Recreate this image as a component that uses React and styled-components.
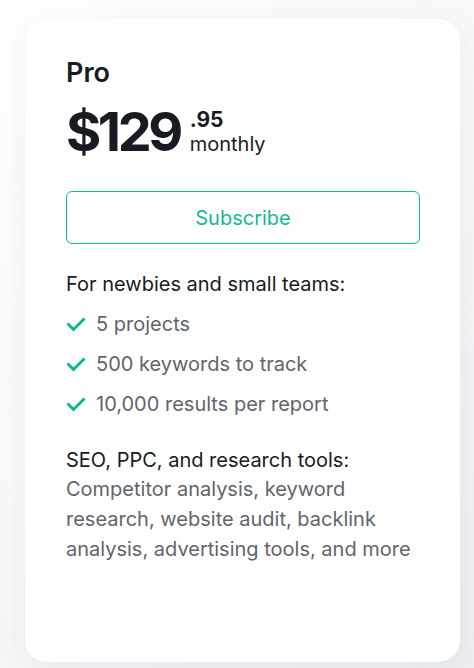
import React from 'react';
import styled, { createGlobalStyle } from 'styled-components';

const GlobalStyle = createGlobalStyle`
  html, body {
    margin: 0;
    background: #f3f4f6;
  }
  body {
    font-family: Inter, "Noto Sans", "Liberation Sans", sans-serif;
  }
`;

const features = ['5 projects', '500 keywords to track', '10,000 results per report'];

function Check() {
  return (
    <CheckIcon viewBox="0 0 20 20" aria-hidden="true">
      <path d="M2.5 10.5 L7.5 15.5 L17.5 5.5" fill="none" stroke="#00b98f" strokeWidth="2.8" strokeLinecap="square" />
    </CheckIcon>
  );
}

function App() {
  return (
    <Page>
      <GlobalStyle />
      <Card>
        <Plan>Pro</Plan>
        <PriceRow>
          <Amount>$129</Amount>
          <PriceSide>
            <Cents>.95</Cents>
            <Period>monthly</Period>
          </PriceSide>
        </PriceRow>
        <SubscribeButton>Subscribe</SubscribeButton>
        <SectionTitle>For newbies and small teams:</SectionTitle>
        <FeatureList>
          {features.map((f) => (
            <Feature key={f}>
              <Check />
              {f}
            </Feature>
          ))}
        </FeatureList>
        <ToolsTitle>SEO, PPC, and research tools:</ToolsTitle>
        <ToolsText>
          Competitor analysis, keyword research, website audit, backlink analysis, advertising tools, and more
        </ToolsText>
      </Card>
    </Page>
  );
}

export default App;

const Page = styled.div`
  width: 474px;
  height: 668px;
  box-sizing: border-box;
  padding: 19px 14px 6px 25px;
  background: linear-gradient(135deg, #ffffff 0%, #f7f8f9 45%, #eceef1 100%);
  overflow: hidden;
`;

const Card = styled.div`
  height: 100%;
  box-sizing: border-box;
  background: #ffffff;
  border-radius: 22px;
  padding: 38px 40px 0 41px;
  box-shadow: 0 4px 30px rgba(40, 45, 60, 0.06);
  display: flex;
  flex-direction: column;
`;

const Plan = styled.div`
  font-size: 27px;
  line-height: 32px;
  font-weight: 600;
  color: #191b23;
`;

const PriceRow = styled.div`
  display: flex;
  align-items: flex-start;
  margin-top: 13px;
`;

const Amount = styled.div`
  font-size: 54px;
  line-height: 60px;
  font-weight: 700;
  letter-spacing: -3.5px;
  color: #191b23;
`;

const PriceSide = styled.div`
  display: flex;
  flex-direction: column;
  margin-left: 10px;
  padding-top: 7px;
`;

const Cents = styled.span`
  font-size: 21px;
  line-height: 22px;
  font-weight: 700;
  color: #191b23;
`;

const Period = styled.span`
  font-size: 20px;
  line-height: 26px;
  color: #191b23;
`;

const SubscribeButton = styled.button`
  margin-top: 29px;
  height: 53px;
  width: 100%;
  border: 1px solid #00c29a;
  border-radius: 6px;
  background: #ffffff;
  color: #16b996;
  font-family: inherit;
  font-size: 20px;
  cursor: pointer;
`;

const SectionTitle = styled.div`
  margin-top: 27px;
  font-size: 20px;
  line-height: 26px;
  color: #191b23;
`;

const FeatureList = styled.ul`
  list-style: none;
  margin: 7px 0 0;
  padding: 0;
`;

const Feature = styled.li`
  display: flex;
  align-items: center;
  gap: 10px;
  height: 40px;
  font-size: 20px;
  color: #62646e;
`;

const CheckIcon = styled.svg`
  width: 20px;
  height: 20px;
  flex: none;
`;

const ToolsTitle = styled.div`
  margin-top: 22px;
  font-size: 20px;
  line-height: 28px;
  color: #191b23;
`;

const ToolsText = styled.div`
  font-size: 20px;
  line-height: 30px;
  color: #62646e;
`;
